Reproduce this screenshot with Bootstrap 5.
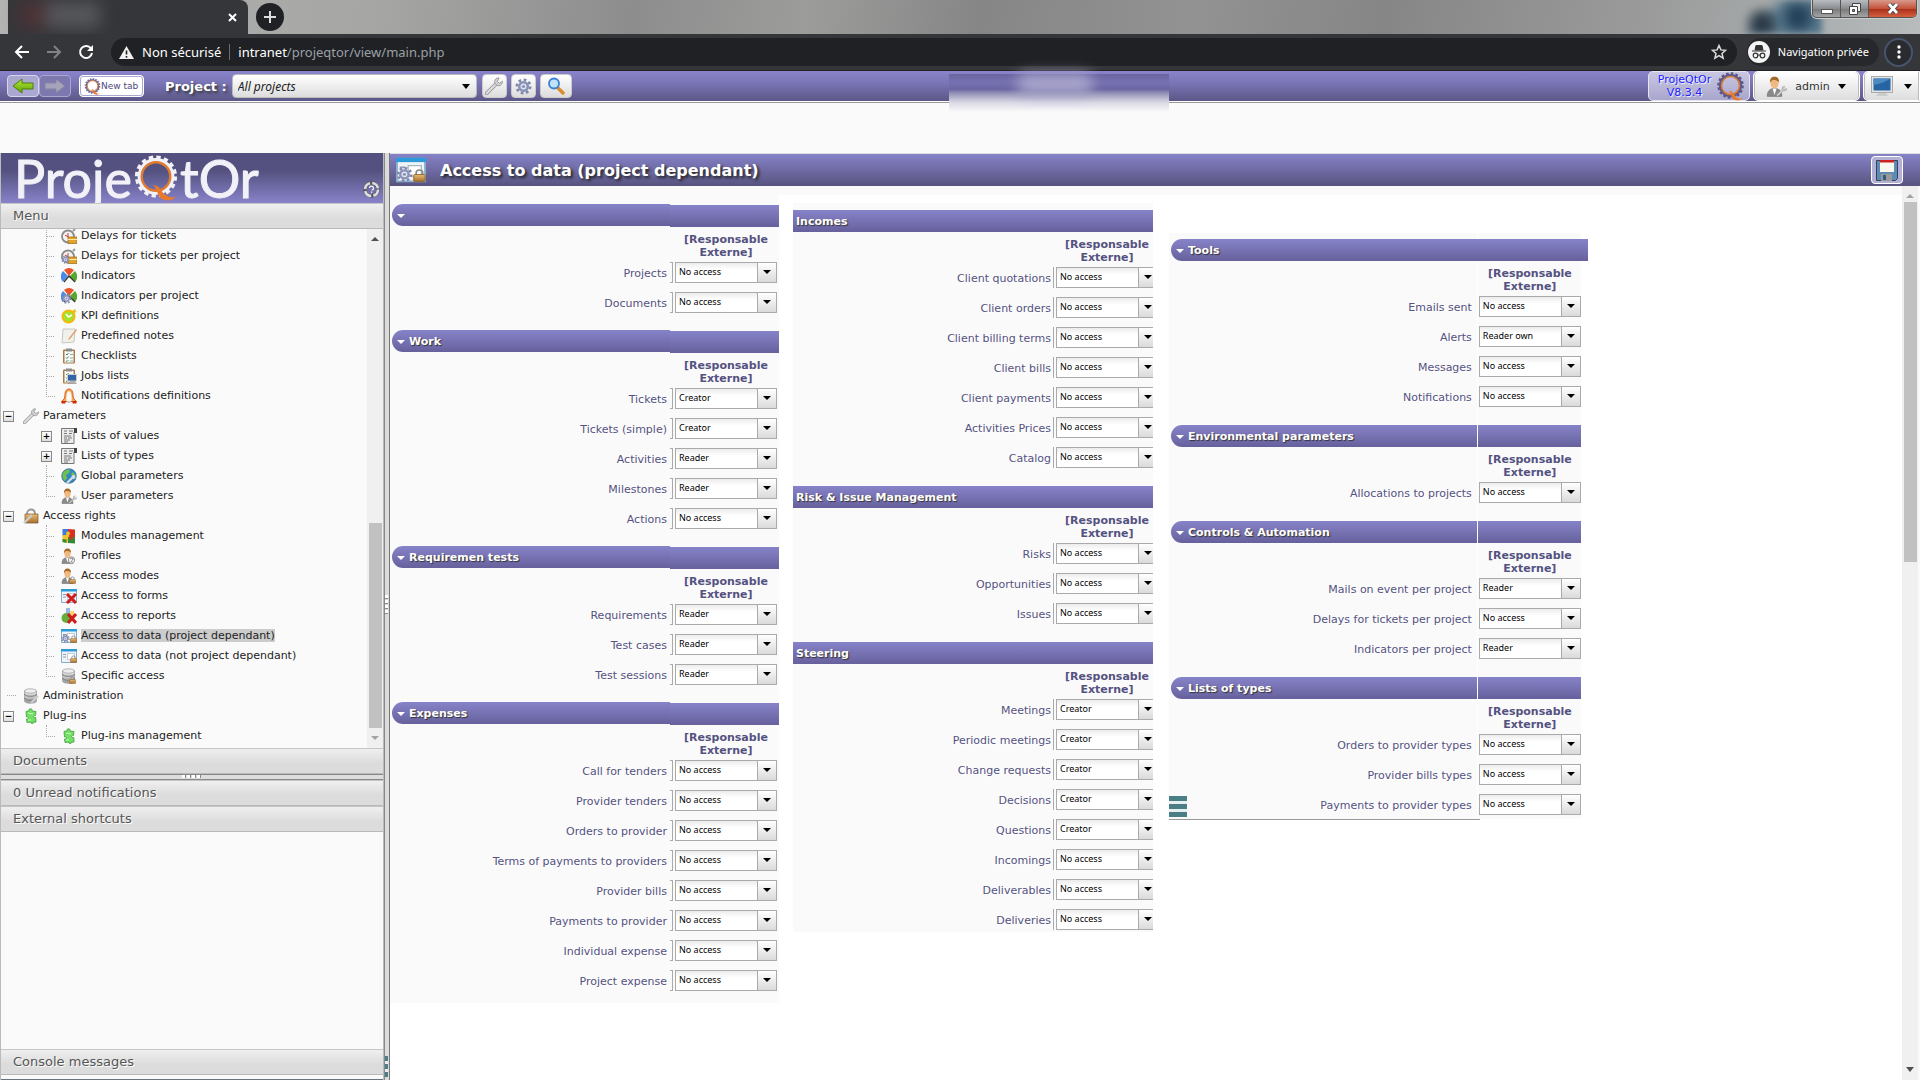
<!DOCTYPE html>
<html lang="en">
<head>
<meta charset="utf-8">
<meta name="viewport" content="width=device-width, initial-scale=1">
<title>ProjeQtOr - Access to data</title>
<link href="https://cdn.jsdelivr.net/npm/bootstrap@5.3.0/dist/css/bootstrap.min.css" rel="stylesheet">
<style>
:root{--ui:"DejaVu Sans",Verdana,sans-serif;--chrome:"Noto Sans",sans-serif;--ink:#545281}
body{font:11px/13px var(--ui);color:#222;background:#fafafa;height:100vh;overflow:hidden}
a{color:inherit;text-decoration:none}
svg{display:block;flex:none}
button{line-height:1}
/* browser frame */
.tabstrip{height:34px;background:linear-gradient(100deg,#b4b4b2 0,#a5a5a4 20%,#8d8d8d 33%,#9c9c9b 42%,#868686 51%,#929292 62%,#868686 72%,#9b9b9b 86%,#a8adae 94%,#b9bcbd);flex:none;padding-left:8px;overflow:hidden}
.browser-tab{width:240px;background:#35363a;border-radius:0 8px 0 0;padding-right:11px;position:relative}
.tab-smudge{position:absolute;left:12px;top:2px;width:80px;height:26px;filter:blur(8px);background:linear-gradient(90deg,#4c3236 25%,#56575b 40%)}
.close-x,.plus-btn,.nav-ico{border:0;background:none;padding:0;color:#e8eaed}
.plus-btn{width:28px;height:28px;border-radius:50%;background:#202124;margin:3px 0 0 8px}
.figure-blur{width:80px;height:34px;margin-right:-10px;filter:blur(3px);background:radial-gradient(circle at 70% 50%,#26435c 0 10%,transparent 36%),radial-gradient(circle at 25% 70%,#2c3b48 0 8%,transparent 30%),linear-gradient(135deg,transparent 26%,#5d7c8e 42%,#55768c 90%)}
.win-btns{height:18px;border:1px solid #555;border-top:0;border-radius:0 0 5px 5px;overflow:hidden;box-shadow:0 0 0 1px #ccc;margin-right:3px;z-index:1}
.win-btns button{border:0;border-right:1px solid #555;padding:0;width:28px;background:linear-gradient(#b8bcc0,#8a8d90 50%,#777 51%,#a5a5a5)}
.win-btns .win-close{width:47px;border:0;background:linear-gradient(#d99a8c,#c4523c 50%,#a82e17 51%,#d5603f)}
.addr-row{height:37px;background:#35363a;border-bottom:1px solid #222;flex:none;font:13px/18px var(--chrome);color:#fff;padding:4px 7px 4px 14px}
.omni{background:#202124;border-radius:14px;height:28px;padding:0 10px 0 8px;margin-left:17px}
.omni-sep{width:1px;height:16px;background:#6b6d71}
.omni-url{color:#9aa0a6}
.incog{height:28px;border-radius:14px;background:#27282b;font-size:11px;padding:0 10px 0 1px;margin:0 5px 0 10px}
.dots-btn{width:29px;height:29px;border-radius:50%;border:2px solid #46546c;background:#2a2b2e;padding:0}
/* application bar */
.app-bar{height:30px;flex:none;background:linear-gradient(#8a84cc,#7a75b5 40%,#5b5787);padding-left:7px}
.bar-line{height:2px;flex:none;background:#fff;border-bottom:1px solid #999}
.gap-band{height:50px;flex:none}
.lite-btn{border:1px solid #d7d5ec;border-radius:4px;background:#aaa7d1;padding:0;height:22px;width:32px}
.lite-btn:disabled{background:#7d79b0;border-color:#aaa7cf}
.newtab{width:65px;background:#fff;border:1px solid #fff;outline:1px solid #aaa7d1;outline-offset:-2px;color:#4c4a7c;font-size:9px}
.proj-lab{font-weight:700;font-size:13px;color:#fff;text-shadow:2px 2px 3px #333;margin:0 5px 0 21px}
.proj-sel{width:245px;height:24px;border:1px solid #bbb;border-radius:4px;font:italic 12px/16px var(--chrome);color:#222;padding:1px 0 0 5px;appearance:none;background:url("data:image/svg+xml,%3Csvg xmlns='http://www.w3.org/2000/svg' width='8' height='5'%3E%3Cpath d='M0 0h8L4 5z'/%3E%3C/svg%3E") right 6px center no-repeat,linear-gradient(#fff,#ddd)}
.tool-btns{gap:4px;margin-left:5px}
.tool-btn{height:24px;width:25px;border:1px solid #ccc;border-radius:4px;background:linear-gradient(#fff,#dcdcdc);padding:0}
.tool-btn.wide{width:32px}
.app-right{gap:3px}
.ver-btn{width:102px;height:30px;border:1px solid #e5e4f2;border-radius:5px;background:linear-gradient(#c9c7e2,#a9a6cd);color:#22f;text-shadow:1px 1px 1px #fff;line-height:13px}
.user-btn{width:107px;height:30px;border:1px solid #fff;border-radius:5px;background:linear-gradient(#fff,#ddd);box-shadow:inset 1px 0 0 #bbb,inset -1px 0 0 #bbb;padding:0 13px 0 12px;color:#333;font-size:11px}
.user-btn.screen{width:57px;border-radius:5px 0 0 5px;padding:0 7px}
.name-blur{position:absolute;left:949px;top:74px;width:220px;height:38px;background:linear-gradient(#6a659f,#7671b1 22%,#6b66a2 40%,#9996b9 52%,#dad9e5 75%,#fafafa)}
.name-blur i{display:block;width:76px;height:20px;margin:0 0 0 68px;background:#a9a6cc;border-radius:9px;filter:blur(7px)}
/* side panel */
.side{width:20%;border-left:1px solid #bbb;border-right:1px solid #bbb;flex:none}
.brand{height:50px;flex:none;background:linear-gradient(#545180 0,#545180 35%,#8883c9);padding:0 3px 0 13px;color:#f1f1f7}
.brand-word{font:400 52px/50px Lato,sans-serif;-webkit-text-stroke:1px #f1f1f7}
.fold{height:26px;flex:none;border:0;border-bottom:1px solid #b9b9b9;border-top:1px solid #c5c5c5;background:linear-gradient(#efefef,#dcdcdc 60%);font:13px/16px var(--ui);color:#555;text-align:left;padding:0 0 0 12px;text-shadow:1px 1px 0 #fff;width:100%}
.upper{flex:621 1 0;min-height:0}
.lower{flex:300 1 0;min-height:0}
.hsplit{height:6px;flex:none;border-top:1px solid #888;border-bottom:1px solid #888;background:#ddd}
.grip-h{width:20px;height:3px;background:repeating-linear-gradient(90deg,#fff 0 3px,#888 3px 4px,#ddd 4px 5px)}
.tree{list-style:none;margin:-4px 0 0;padding:0}
.tree li{height:20px;display:flex;align-items:center}
.tree a{line-height:13px;padding-top:1px;margin-left:4px}
.tree svg{width:16px;height:16px;margin:2px 0 0 6px}
.twig{width:9px;height:20px;margin-left:45px;flex:none;border-left:1px dotted #aaa;background:repeating-linear-gradient(90deg,#aaa 0 1px,transparent 1px 2px) 0 11px/9px 1px no-repeat}
.twig.end{height:12px;border-bottom:1px dotted #aaa;background:none;align-self:flex-start}
.exp{width:11px;height:11px;border:1px solid #888;background:linear-gradient(#fff,#ddd);padding:0;font:bold 9px/8px var(--ui);color:#000;margin:2px 0 0 2px;flex:none}
.exp.sub{margin-left:40px}
.tree .exp+svg{margin-left:9px}
.rootdash{width:9px;margin-left:6px;border-top:1px dotted #aaa}
.tree .rootdash+svg{margin-left:7px}
.tree .picked{background:#ccc;padding:0}
.scroller{width:16px;flex:none;background:#f0f0f0;align-items:center}
.scroller.outer{margin-right:2px}
.thumb{width:13px;background:#c1c1c1}
.vsplit{width:6px;flex:none;border-left:1px solid #888;border-right:1px solid #777;background:#dcdcdc}
.grip-v{width:3px;height:20px;background:repeating-linear-gradient(#fff 0 3px,#888 3px 4px,#ddd 4px 5px)}
/* main panel */
.page-head{height:33px;border-top:1px solid #ddd;flex:none;background:linear-gradient(#8682c8,#58547f);padding:0 17px 0 6px}
.page-head h1{font:bold 16px/20px var(--ui);color:#fff;text-shadow:2px 2px 3px #222;margin:0 0 0 14px;padding-top:1px}
.save-btn{width:32px;height:28px;border:1px solid #fff;border-radius:4px;background:#b3b0d5;padding:0}
.work{background:#fff;border-top:9px solid #fafafa;min-width:0}
.col-a{flex:388 1 0;background:#fafafa;padding:9px 0 12px 2px;min-width:0}
.col-b{flex:361 1 0;background:#fafafa;margin:8px 0 0 14px;padding:7px 0 2px;min-width:0}
.col-c{flex:418 1 0;margin:38px 0 0 16px;padding:6px 0 4px 2px;min-width:0;position:relative;background:linear-gradient(#fff,#fff) right 110px top/1px 100% no-repeat,linear-gradient(#fafafa,#fafafa) left/calc(100% - 7px) 100% no-repeat;border-bottom:1px solid #999;border-image:linear-gradient(90deg,#999 0 74%,transparent 74%) 1}
.col-rest{flex:315 1 0}
.sec-bar,.sec-side{height:22px;background:linear-gradient(#8783c9,#66619c)}
.sec-bar{flex:1 1 0;font:bold 11px/23px var(--ui);color:#fff;text-shadow:1px 1px 1px #333;margin:0;padding-left:5px;border-radius:11px 0 0 11px}
.sec-bar::before{content:"";display:inline-block;border:4px solid transparent;border-top-color:#fff;border-bottom:0;margin-right:4px;vertical-align:1px}
.col-b .sec-bar{border-radius:0;padding-left:3px}
.col-b .sec-bar::before{display:none}
.col-a .sec-side{width:109px;margin:1px 0 -1px}
.col-c .sec-side{width:103px;margin:0 7px 0 1px}
.role{text-align:center;font-weight:bold;color:var(--ink);width:102px;margin-left:auto;padding:6px 0 3px}
.col-a .role{padding-top:7px;margin-right:2px}
.col-b .role{margin-right:-5px}
.col-c .role{margin-right:7px}
.acc{height:21px;margin-bottom:9px;display:flex;justify-content:flex-end}
.acc label{color:var(--ink);padding:5px 3px 0 0;white-space:nowrap;text-shadow:1px 1px 0 #fff}
.acc select{width:102px;height:21px;border:1px solid #aaa;border-radius:0;font:9px/12px "Noto Sans",var(--ui);color:#000;padding:0 0 2px 3px;appearance:none;flex:none;order:2;background:url("data:image/svg+xml,%3Csvg xmlns='http://www.w3.org/2000/svg' width='8' height='4'%3E%3Cpath d='M0 0h8L4 4z'/%3E%3C/svg%3E") 87px 7px no-repeat,linear-gradient(#aaa,#aaa) 81px 0/1px 100% no-repeat,linear-gradient(#fff,#dadada) 82px 0/18px 100% no-repeat,linear-gradient(#ececec,#fff 35%)}
.col-a .acc{padding-right:2px}
.col-a .acc::before{content:"";order:1;width:3px;margin-right:2px;border:1px solid #aaa;border-left:0}
.col-b .acc::before{content:"";order:1;width:1px;margin-right:2px;background:#aaa}
.col-b .acc label{padding-right:2px}
.col-b .acc select{width:97px;border-right:0}
.col-c .acc{padding-right:7px}
.col-c .acc label{padding-right:7px}
section{padding-bottom:9px}
.col-a section{padding-bottom:8px}
section:last-of-type,.col-a section:last-of-type{padding-bottom:0}
section:last-of-type .acc:last-child{margin-bottom:0}
.teal{width:18px;height:21px;background:repeating-linear-gradient(#4b7f86 0 5px,#e8eff0 5px 8px)}
.col-c .teal{position:absolute;left:0;bottom:2px}
.vsplit .teal{width:3px;margin-bottom:3px}
.fit-y{min-height:0}
.fit-x{min-width:0}
</style>
<script src="https://cdn.jsdelivr.net/npm/bootstrap@5.3.0/dist/js/bootstrap.bundle.min.js"></script>
</head>
<body class="d-flex flex-column">
<svg width="0" height="0" class="position-absolute">
<defs>
<linearGradient id="gold" x1="0" y1="0" x2="0" y2="1"><stop offset="0" stop-color="#e8bd76"/><stop offset="1" stop-color="#a96f2c"/></linearGradient>
<linearGradient id="steel" x1="0" y1="0" x2="0" y2="1"><stop offset="0" stop-color="#eee"/><stop offset="1" stop-color="#999"/></linearGradient>
<linearGradient id="lime" x1="0" y1="0" x2="0" y2="1"><stop offset="0" stop-color="#b4e63c"/><stop offset="1" stop-color="#5ca300"/></linearGradient>
</defs>
<symbol id="lock" viewBox="0 0 8 8"><path d="M2 4V2.500a2 2 0 0 1 4 0V4" fill="none" stroke="#888"/><rect x=".5" y="3.500" width="7" height="4.500" rx=".5" fill="url(#gold)" stroke="#8a5c24" stroke-width=".5"/></symbol>
<symbol id="cog" viewBox="0 0 16 16"><circle cx="8" cy="8" r="6.300" fill="none" stroke="#7f87ae" stroke-width="2.500" stroke-dasharray="2.500 2.450"/><circle cx="8" cy="8" r="4" fill="#dfe2f0" stroke="#8a92b8" stroke-width="2.400"/><circle cx="8" cy="8" r="1.500" fill="#8a92b8"/></symbol>
<symbol id="clock" viewBox="0 0 16 16"><circle cx="7" cy="8.500" r="6" fill="#f4f4f4" stroke="#8b8b8b" stroke-width="1.800"/><path d="M7 9V5M7 9l-3-2" stroke="#c33"/><path d="M12 3l2-2" stroke="#999" stroke-width="2"/><path d="M7 9h9v6.500H7z" fill="#e0a32e" stroke="#9a6a12" stroke-width=".7"/><path d="M7 11.500h9" stroke="#ffe9a0"/></symbol>
<symbol id="clockp" viewBox="0 0 16 16"><use href="#clock"/><use href="#cog" x="0" y="7" width="9" height="9"/></symbol>
<symbol id="pie" viewBox="0 0 16 16"><path d="M8 8L3 2a8 8 0 0 1 10 0z" fill="#e95528"/><path d="M8 9L14 3a8 8 0 0 1 0 11z" fill="#56a92c"/><path d="M7 8L2 3a8 8 0 0 0 0 11z" fill="#4d8ae6"/><path d="M3 14l5-6 6 6" fill="none" stroke="#333" stroke-width="1.200"/></symbol>
<symbol id="piep" viewBox="0 0 16 16"><use href="#pie"/><use href="#cog" x="0" y="5" width="11" height="11"/></symbol>
<symbol id="kpi" viewBox="0 0 16 16"><circle cx="7.500" cy="8.500" r="6" fill="#a4e22c" stroke="#f2b80c" stroke-width="2"/><path d="M11 3l3-2 1.500 3-2 1z" fill="#f5bd1b"/><path d="M5 6l2.500 3L11 7" fill="none" stroke="#fff" stroke-width="1.500"/></symbol>
<symbol id="note" viewBox="0 0 16 16"><path d="M2 1h12l-1 13-12 1z" fill="#f1f1ec" stroke="#c8c8c0"/><path d="M15 1L8 10l-1 2 2-1L16 2z" fill="#e69a63"/></symbol>
<symbol id="check" viewBox="0 0 16 16"><rect x="2" y="1.500" width="12" height="14" rx="1" fill="#a97b49"/><rect x="3.500" y="3" width="9" height="11.500" fill="#f9faf5"/><rect x="5" y=".5" width="6" height="3" fill="#8d8d8d"/><path d="M5 6l1 1 1.500-2M5 9.500l1 1L7.500 8.500M5 13l1 .5L7.500 12" stroke="#3a8d72" fill="none"/><path d="M9 6.500h3M9 10h3M9 13h3" stroke="#8aa"/></symbol>
<symbol id="jobs" viewBox="0 0 16 16"><use href="#check"/><rect x="6.500" y="6.500" width="9" height="6.500" fill="#3364a8" stroke="#ccc"/><path d="M7 15.500h8.500l-2-2h-4z" fill="#bbb" stroke="#888" stroke-width=".5"/></symbol>
<symbol id="bell" viewBox="0 0 16 16"><path d="M8 1c3 0 4 3 4 6s1 4.500 3.500 6.500H.5C3 11.500 4 10 4 7s1-6 4-6z" fill="#f4a44a" stroke="#e05a1c" stroke-width="1"/><path d="M5.500 13c-.5-5 0-9 2.500-10 2.500 1 3 5 2.500 10z" fill="#fafafa"/><path d="M.5 14.300h4M11.500 14.300h4" stroke="#c9300a" stroke-width="2.400"/><path d="M6 14h4" stroke="#ccd" stroke-width="2"/></symbol>
<symbol id="wrench" viewBox="0 0 16 16"><path d="M1.500 14.500L10 6" stroke="#9a9a9a" stroke-width="3.400" stroke-linecap="round"/><path d="M1.500 14.500L10 6" stroke="#dedede" stroke-width="1.800" stroke-linecap="round"/><path d="M12.500.8a3.500 3.500 0 1 0 3 3L13 5.500 11 4z" fill="#cfcfcf" stroke="#999" stroke-width=".8"/></symbol>
<symbol id="list" viewBox="0 0 16 16"><path d="M.5.5h15v3.500h-2.500v11.500H.5z" fill="#ececec" stroke="#777"/><path d="M3 3h3M8 3h4M3 5.500h3M8 5.500h3M3 8h7M3 10h3M7 10h4M3 12h6M3 14h4" stroke="#777"/><path d="M13 0h3v5h-3z" fill="#444"/></symbol>
<symbol id="globe" viewBox="0 0 16 16"><circle cx="8" cy="8" r="7.300" fill="#3488c6" stroke="#235b86" stroke-width=".6"/><path d="M2 5c2-4 6-4 7-3L8 5 5 7l1 3-2 3C1 10 1 7 2 5zM12 4l3 4-3 1-2-3z" fill="#6fc04e"/><path d="M6 15l6-6" stroke="#ddd" stroke-width="2.200"/><circle cx="12.500" cy="9" r="2" fill="#d5dde4"/></symbol>
<symbol id="man" viewBox="0 0 16 16"><path d="M1 15.500c0-4 2-6 5.500-6s5.500 2 5.500 6z" fill="#8b8b8b" stroke="#666" stroke-width=".5"/><path d="M5 9.500l1.500 5L8 9.500z" fill="#fff"/><ellipse cx="6.500" cy="5.200" rx="3.200" ry="4.200" fill="#efb981"/><path d="M3 5c0-3 1-4.500 3.500-4.500S10 2 10 5C9 3 6 3 5 3z" fill="#a56a2a"/></symbol>
<symbol id="manw" viewBox="0 0 16 16"><use href="#man"/><use href="#wrench" x="8" y="7" width="8" height="9"/></symbol>
<symbol id="manp" viewBox="0 0 16 16"><use href="#man"/><circle cx="10.500" cy="12" r="3.200" fill="#eee" stroke="#999"/><path d="M9.500 11a1.200 1.200 0 1 1 1.200 1.300M10.600 13v1" fill="none" stroke="#666" stroke-width=".8"/></symbol>
<symbol id="manl" viewBox="0 0 16 16"><use href="#man"/><use href="#lock" x="8" y="8" width="7" height="8"/></symbol>
<symbol id="bag" viewBox="0 0 16 16"><path d="M4 6c0-6 8-6 8 0" fill="none" stroke="#999" stroke-width="1.800"/><path d="M2 6h13v9H2z" fill="url(#gold)" stroke="#7d5525" stroke-width=".7"/><path d="M1 15L9 7" stroke="#ccc" stroke-width="2.400"/></symbol>
<symbol id="mods" viewBox="0 0 16 16"><path d="M1.500 1h6v7h-6z" fill="#3d7be0"/><path d="M7 1l7 .5V9H7z" fill="#d93025"/><path d="M1.500 7H8v8l-6.500-1z" fill="#f0c22a"/><path d="M7 9h7v6.500L7 15z" fill="#348b35"/><circle cx="7" cy="5.500" r="2" fill="#f0c22a"/><circle cx="10" cy="10" r="1.800" fill="#d93025"/><path d="M1.500 11l4 .5v3.500l-4-1z" fill="#348b35"/></symbol>
<symbol id="form" viewBox="0 0 16 16"><path d="M.5 1.500h15v13H.5z" fill="#eef3f7" stroke="#86aecb"/><path d="M0 1h16v2.500H0z" fill="#2c9ad6"/><path d="M2 6.500h3M2 9h3" stroke="#8e9bab"/><path d="M6.500 5.500h7v6h-7z" fill="#fff" stroke="#aab7c3" stroke-width=".7"/></symbol>
<symbol id="formx" viewBox="0 0 16 16"><use href="#form"/><path d="M6 6l9 9M15 6l-9 9" stroke="#d01c1c" stroke-width="3"/></symbol>
<symbol id="repx" viewBox="0 0 16 16"><path d="M5 0h4v7H5z" fill="#9bb8ea"/><path d="M9 3h4v5H9z" fill="#f5d573"/><circle cx="5.500" cy="10" r="5" fill="#65ad3c"/><path d="M7 6l8 9M15 6l-8 9" stroke="#cd1d1d" stroke-width="3"/></symbol>
<symbol id="datap" viewBox="0 0 16 16"><use href="#form"/><use href="#cog" x="0" y="6" width="9" height="9"/><use href="#lock" x="9" y="7" width="7" height="8"/></symbol>
<symbol id="data" viewBox="0 0 16 16"><use href="#form"/><use href="#lock" x="9" y="7" width="7" height="8"/></symbol>
<symbol id="db" viewBox="0 0 16 16"><path d="M1.500 3v10c0 3 12 3 12 0V3z" fill="url(#steel)" stroke="#999" stroke-width=".7"/><path d="M1.500 6c0 3 12 3 12 0M1.500 10c0 3 12 3 12 0" fill="none" stroke="#777"/><ellipse cx="7.500" cy="3" rx="6" ry="2.200" fill="#eee" stroke="#999" stroke-width=".7"/></symbol>
<symbol id="dbl" viewBox="0 0 16 16"><use href="#db"/><use href="#lock" x="8" y="8" width="7" height="8"/></symbol>
<symbol id="dbw" viewBox="0 0 16 16"><use href="#db"/><path d="M8 15l7-7" stroke="#ccc" stroke-width="2.200"/></symbol>
<symbol id="plug" viewBox="0 0 16 16"><path d="M3 3.500l3-.5c-1-3 4-3 3 0l4 .5-.5 4c-2.500-1-2.500 3 .3 2L13 14l-3 .3c1 2-2.500 2-2-.3l-4 .5L3.500 11c2.500 1 2.500-3 0-2z" fill="#72e065" stroke="#3d9a38" stroke-width=".8"/><path d="M5 5l5 1M5 12h3" stroke="#c8ffbd"/></symbol>
<symbol id="qring" viewBox="0 0 30 30"><circle cx="15" cy="14" r="12" fill="none" stroke="var(--tooth)" stroke-width="3.500" stroke-dasharray="2.700 2"/><circle cx="15" cy="14" r="10.800" fill="none" stroke="var(--tooth)" stroke-width="2.400"/><circle cx="15" cy="14" r="9.300" fill="none" stroke="#e07a30" stroke-width="1.600"/><path d="M13 19.500c5 .5 5 4 8 6.500 2 1.600 4 1.800 7 1.500-3 2.600-7.500 2.600-10 .5-2.500-2.300-2-6-5-8.500z" fill="#e9792b"/></symbol>
</svg>

<div class="tabstrip d-flex">
  <div class="browser-tab d-flex align-items-center justify-content-end"><span class="tab-smudge"></span>
    <button class="close-x" aria-label="Close tab"><svg width="9" height="9" viewBox="0 0 9 9"><path d="M1 1l7 7M8 1L1 8" stroke="#fff" stroke-width="2"/></svg></button></div>
  <button class="plus-btn d-flex align-items-center justify-content-center" aria-label="New browser tab"><svg width="12" height="12"><path d="M6 0v12M0 6h12" stroke="#ddd" stroke-width="2"/></svg></button>
  <span class="figure-blur ms-auto"></span>
  <div class="win-btns d-flex"><button class="d-flex justify-content-center pt-2" aria-label="Minimise"><svg width="12" height="6"><rect x=".5" y="1.500" width="11" height="4" fill="#fff" stroke="#555"/></svg></button><button class="d-flex justify-content-center align-items-center" aria-label="Restore"><svg width="12" height="12"><path d="M3.500.5h8v8h-8z" fill="#eee" stroke="#444"/><path d="M.5 3.500h8v8h-8z" fill="#fff" stroke="#444"/><path d="M3.500 6.500h2v2h-2z" fill="#888" stroke="#444"/></svg></button><button class="win-close d-flex justify-content-center align-items-center" aria-label="Close"><svg width="12" height="11"><path d="M2 1l8 9M10 1L2 10" stroke="#444" stroke-width="4.500"/><path d="M2 1l8 9M10 1L2 10" stroke="#fff" stroke-width="2.800"/></svg></button></div>
</div>
<div class="addr-row d-flex align-items-center">
  <button class="nav-ico" aria-label="Back"><svg width="16" height="14"><path d="M15 7H2M8 1L2 7l6 6" fill="none" stroke="#fff" stroke-width="2"/></svg></button>
  <button class="nav-ico ms-3" aria-label="Forward"><svg width="16" height="14"><path d="M1 7h13M8 1l6 6-6 6" fill="none" stroke="#808287" stroke-width="2"/></svg></button>
  <button class="nav-ico ms-3" aria-label="Reload"><svg width="16" height="16"><path d="M13 4.500A6 6 0 1 0 14 9" fill="none" stroke="#fff" stroke-width="2"/><path d="M15 1v6H9z" fill="#fff"/></svg></button>
  <div class="omni d-flex align-items-center flex-fill">
    <svg width="15" height="13" viewBox="0 0 15 13"><path d="M7.500 0L15 13H0z" fill="#f1f1f1"/><path d="M7.500 4.500v4M7.500 10v1.700" stroke="#202124" stroke-width="1.600"/></svg>
    <span class="ms-2">Non sécurisé</span><span class="omni-sep mx-2"></span>
    <span>intranet<span class="omni-url">/projeqtor/view/main.php</span></span>
    <svg class="ms-auto" width="16" height="16" viewBox="0 0 16 16"><path d="M8 1.500l1.900 4.400 4.700.4-3.600 3.200 1.100 4.600L8 11.600l-4.100 2.500L5 9.500 1.400 6.300l4.700-.4z" fill="none" stroke="#ddd" stroke-width="1.500"/></svg>
  </div>
  <div class="incog d-flex align-items-center"><svg width="22" height="22" viewBox="0 0 22 22"><circle cx="11" cy="11" r="11" fill="#f5f5f5"/><path d="M4 10h14M7 9l1-4.500h6L15 9z" fill="#333" stroke="#333"/><circle cx="7.500" cy="14.500" r="2.300" fill="none" stroke="#333" stroke-width="1.200"/><circle cx="14.500" cy="14.500" r="2.300" fill="none" stroke="#333" stroke-width="1.200"/><path d="M9.800 14h2.400" stroke="#333"/></svg><span class="ms-2">Navigation privée</span></div>
  <button class="dots-btn d-flex align-items-center justify-content-center" aria-label="Menu"><svg width="4" height="14"><circle cx="2" cy="2" r="1.700" fill="#fff"/><circle cx="2" cy="7" r="1.700" fill="#fff"/><circle cx="2" cy="12" r="1.700" fill="#fff"/></svg></button>
</div>

<header class="app-bar d-flex align-items-center">
  <button class="lite-btn d-flex align-items-center justify-content-center" aria-label="Previous"><svg width="22" height="16" viewBox="0 0 22 16"><path d="M1 8l9-7v4h11v6H10v4z" fill="url(#lime)" stroke="#4b7f0c"/></svg></button>
  <button class="lite-btn d-flex align-items-center justify-content-center" disabled aria-label="Next"><svg width="22" height="16" viewBox="0 0 22 16"><path d="M21 8l-9-7v4H1v6h11v4z" fill="#a5a3ba" stroke="#8583a0"/></svg></button>
  <button class="lite-btn newtab ms-2 d-flex align-items-center px-1"><svg width="17" height="17" style="--tooth:#6e6a9c"><use href="#qring"/></svg><span>New tab</span></button>
  <label class="proj-lab" for="project">Project :</label>
  <select class="proj-sel" id="project"><option>All projects</option></select>
  <div class="tool-btns d-flex">
  <button class="tool-btn d-flex align-items-center justify-content-center" aria-label="Parameters"><svg width="18" height="18"><use href="#wrench"/></svg></button>
  <button class="tool-btn d-flex align-items-center justify-content-center" aria-label="Settings"><svg width="17" height="17"><use href="#cog"/></svg></button>
  <button class="tool-btn wide d-flex align-items-center justify-content-center" aria-label="Search"><svg width="18" height="18" viewBox="0 0 18 18"><path d="M10 10l6 6" stroke="#d98d2b" stroke-width="3.500" stroke-linecap="round"/><circle cx="7" cy="6.500" r="5" fill="#bfe3fb" stroke="#3c7fd0" stroke-width="1.800"/></svg></button>
  </div>
  <div class="app-right d-flex ms-auto">
  <button class="ver-btn d-flex align-items-center p-0"><span class="text-center flex-fill ps-2">ProjeQtOr<br>V8.3.4</span><svg class="me-1 ms-1" width="29" height="29" style="--tooth:#5d5988"><use href="#qring"/></svg></button>
  <button class="user-btn d-flex align-items-center justify-content-between"><svg width="21" height="23"><use href="#manw"/></svg><span>admin</span><svg width="8" height="5"><path d="M0 0h8L4 5z"/></svg></button>
  <button class="user-btn screen d-flex align-items-center justify-content-between" aria-label="Screen"><svg width="22" height="22" viewBox="0 0 22 22"><rect x=".5" y="1.500" width="21" height="16" fill="#e4e4e4" stroke="#aaa"/><rect x="2.500" y="3.500" width="17" height="12" fill="#2565a3"/><path d="M2.500 10c6-1 12-3 17-6.500H2.500z" fill="#4e8ac2"/><path d="M7 18h8l2 3H5z" fill="#ccc"/></svg><svg width="8" height="5"><path d="M0 0h8L4 5z"/></svg></button>
  </div>
</header>
<div class="name-blur"><i></i></div>
<div class="bar-line"></div>
<div class="gap-band"></div>

<div class="d-flex flex-fill fit-y">
<aside class="side d-flex flex-column">
  <div class="upper d-flex flex-column">
    <div class="brand d-flex justify-content-between">
      <div class="d-flex align-items-center"><span class="brand-word">Proje</span><svg width="48" height="46" style="--tooth:#f1f1f7"><use href="#qring"/></svg><span class="brand-word">tOr</span></div>
      <svg class="align-self-end mb-1" width="17" height="19" viewBox="0 0 17 19"><circle cx="8.500" cy="9.500" r="6.500" fill="none" stroke="#555" stroke-width="3.600"/><circle cx="8.500" cy="9.500" r="6.500" fill="none" stroke="#ddd" stroke-width="2.600" stroke-dasharray="8 2.200"/><path d="M6.500 8a2 2 0 1 1 2.200 2.200M8.600 11.500v1.300" fill="none" stroke="#fff" stroke-width="1.200"/></svg>
    </div>
    <button class="fold">Menu</button>
    <div class="d-flex flex-fill fit-y">
      <nav class="flex-fill overflow-hidden"><ul class="tree">
        <li><span class="twig"></span><svg><use href="#clock"/></svg><a href="#">Delays for tickets</a></li>
        <li><span class="twig"></span><svg><use href="#clockp"/></svg><a href="#">Delays for tickets per project</a></li>
        <li><span class="twig"></span><svg><use href="#pie"/></svg><a href="#">Indicators</a></li>
        <li><span class="twig"></span><svg><use href="#piep"/></svg><a href="#">Indicators per project</a></li>
        <li><span class="twig"></span><svg><use href="#kpi"/></svg><a href="#">KPI definitions</a></li>
        <li><span class="twig"></span><svg><use href="#note"/></svg><a href="#">Predefined notes</a></li>
        <li><span class="twig"></span><svg><use href="#check"/></svg><a href="#">Checklists</a></li>
        <li><span class="twig"></span><svg><use href="#jobs"/></svg><a href="#">Jobs lists</a></li>
        <li><span class="twig end"></span><svg><use href="#bell"/></svg><a href="#">Notifications definitions</a></li>
        <li><button class="exp">−</button><svg><use href="#wrench"/></svg><a href="#">Parameters</a></li>
        <li><button class="exp sub">+</button><svg><use href="#list"/></svg><a href="#">Lists of values</a></li>
        <li><button class="exp sub">+</button><svg><use href="#list"/></svg><a href="#">Lists of types</a></li>
        <li><span class="twig"></span><svg><use href="#globe"/></svg><a href="#">Global parameters</a></li>
        <li><span class="twig end"></span><svg><use href="#manw"/></svg><a href="#">User parameters</a></li>
        <li><button class="exp">−</button><svg><use href="#bag"/></svg><a href="#">Access rights</a></li>
        <li><span class="twig"></span><svg><use href="#mods"/></svg><a href="#">Modules management</a></li>
        <li><span class="twig"></span><svg><use href="#manp"/></svg><a href="#">Profiles</a></li>
        <li><span class="twig"></span><svg><use href="#manl"/></svg><a href="#">Access modes</a></li>
        <li><span class="twig"></span><svg><use href="#formx"/></svg><a href="#">Access to forms</a></li>
        <li><span class="twig"></span><svg><use href="#repx"/></svg><a href="#">Access to reports</a></li>
        <li><span class="twig"></span><svg><use href="#datap"/></svg><a class="picked" href="#">Access to data (project dependant)</a></li>
        <li><span class="twig"></span><svg><use href="#data"/></svg><a href="#">Access to data (not project dependant)</a></li>
        <li><span class="twig end"></span><svg><use href="#dbl"/></svg><a href="#">Specific access</a></li>
        <li><span class="rootdash"></span><svg><use href="#dbw"/></svg><a href="#">Administration</a></li>
        <li><button class="exp">−</button><svg><use href="#plug"/></svg><a href="#">Plug-ins</a></li>
        <li><span class="twig end"></span><svg><use href="#plug"/></svg><a href="#">Plug-ins management</a></li>
      </ul></nav>
      <div class="scroller d-flex flex-column py-2"><svg width="8" height="4"><path d="M0 4h8L4 0z" fill="#505050"/></svg><div style="flex:283 1 0"></div><div class="thumb" style="flex:206 1 0"></div><svg class="mt-2" width="8" height="4"><path d="M0 0h8L4 4z" fill="#a3a3a3"/></svg></div>
    </div>
    <button class="fold">Documents</button>
  </div>
  <div class="hsplit d-flex justify-content-center"><span class="grip-h"></span></div>
  <div class="lower d-flex flex-column">
    <button class="fold">0 Unread notifications</button>
    <button class="fold">External shortcuts</button>
    <div class="flex-fill"></div>
    <button class="fold">Console messages</button>
    <div class="border-bottom border-secondary pt-1"></div>
  </div>
</aside>
<div class="vsplit d-flex flex-column"><span class="grip-v mt-auto"></span><span class="teal mt-auto"></span></div>

<main class="d-flex flex-column flex-fill fit-x">
  <div class="page-head d-flex align-items-center">
    <svg width="30" height="28" viewBox="0 0 16 16" preserveAspectRatio="none"><use href="#datap"/></svg>
    <h1>Access to data (project dependant)</h1>
    <button class="save-btn ms-auto d-flex align-items-center justify-content-center" aria-label="Save"><svg width="22" height="21" viewBox="0 0 22 21"><path d="M.5.5h21v18l-2 2H.5z" fill="#5d8bb5" stroke="#345"/><path d="M4 0h14v12H4z" fill="#f8f8f0"/><path d="M4 0h14v2.500H4z" fill="#cf2020"/><path d="M5 14h11v7H5z" fill="#999"/><path d="M7 15h3v5H7z" fill="#335d85"/></svg></button>
  </div>
  <div class="d-flex flex-fill fit-y">
  <form class="work d-flex flex-fill align-items-start">
    <div class="col-a">
      <section><div class="d-flex"><h2 class="sec-bar"></h2><div class="sec-side"></div></div><div class="role">[Responsable<br>Externe]</div>
        <div class="acc"><label for="a1">Projects</label><select id="a1"><option>No access</option></select></div>
        <div class="acc"><label for="a2">Documents</label><select id="a2"><option>No access</option></select></div></section>
      <section><div class="d-flex"><h2 class="sec-bar">Work</h2><div class="sec-side"></div></div><div class="role">[Responsable<br>Externe]</div>
        <div class="acc"><label for="a3">Tickets</label><select id="a3"><option>Creator</option></select></div>
        <div class="acc"><label for="a4">Tickets (simple)</label><select id="a4"><option>Creator</option></select></div>
        <div class="acc"><label for="a5">Activities</label><select id="a5"><option>Reader</option></select></div>
        <div class="acc"><label for="a6">Milestones</label><select id="a6"><option>Reader</option></select></div>
        <div class="acc"><label for="a7">Actions</label><select id="a7"><option>No access</option></select></div></section>
      <section><div class="d-flex"><h2 class="sec-bar">Requiremen tests</h2><div class="sec-side"></div></div><div class="role">[Responsable<br>Externe]</div>
        <div class="acc"><label for="a8">Requirements</label><select id="a8"><option>Reader</option></select></div>
        <div class="acc"><label for="a9">Test cases</label><select id="a9"><option>Reader</option></select></div>
        <div class="acc"><label for="a10">Test sessions</label><select id="a10"><option>Reader</option></select></div></section>
      <section><div class="d-flex"><h2 class="sec-bar">Expenses</h2><div class="sec-side"></div></div><div class="role">[Responsable<br>Externe]</div>
        <div class="acc"><label for="a11">Call for tenders</label><select id="a11"><option>No access</option></select></div>
        <div class="acc"><label for="a12">Provider tenders</label><select id="a12"><option>No access</option></select></div>
        <div class="acc"><label for="a13">Orders to provider</label><select id="a13"><option>No access</option></select></div>
        <div class="acc"><label for="a14">Terms of payments to providers</label><select id="a14"><option>No access</option></select></div>
        <div class="acc"><label for="a15">Provider bills</label><select id="a15"><option>No access</option></select></div>
        <div class="acc"><label for="a16">Payments to provider</label><select id="a16"><option>No access</option></select></div>
        <div class="acc"><label for="a17">Individual expense</label><select id="a17"><option>No access</option></select></div>
        <div class="acc"><label for="a18">Project expense</label><select id="a18"><option>No access</option></select></div></section>
    </div>
    <div class="col-b">
      <section><h2 class="sec-bar">Incomes</h2><div class="role">[Responsable<br>Externe]</div>
        <div class="acc"><label for="b1">Client quotations</label><select id="b1"><option>No access</option></select></div>
        <div class="acc"><label for="b2">Client orders</label><select id="b2"><option>No access</option></select></div>
        <div class="acc"><label for="b3">Client billing terms</label><select id="b3"><option>No access</option></select></div>
        <div class="acc"><label for="b4">Client bills</label><select id="b4"><option>No access</option></select></div>
        <div class="acc"><label for="b5">Client payments</label><select id="b5"><option>No access</option></select></div>
        <div class="acc"><label for="b6">Activities Prices</label><select id="b6"><option>No access</option></select></div>
        <div class="acc"><label for="b7">Catalog</label><select id="b7"><option>No access</option></select></div></section>
      <section><h2 class="sec-bar">Risk &amp; Issue Management</h2><div class="role">[Responsable<br>Externe]</div>
        <div class="acc"><label for="b8">Risks</label><select id="b8"><option>No access</option></select></div>
        <div class="acc"><label for="b9">Opportunities</label><select id="b9"><option>No access</option></select></div>
        <div class="acc"><label for="b10">Issues</label><select id="b10"><option>No access</option></select></div></section>
      <section><h2 class="sec-bar">Steering</h2><div class="role">[Responsable<br>Externe]</div>
        <div class="acc"><label for="b11">Meetings</label><select id="b11"><option>Creator</option></select></div>
        <div class="acc"><label for="b12">Periodic meetings</label><select id="b12"><option>Creator</option></select></div>
        <div class="acc"><label for="b13">Change requests</label><select id="b13"><option>Creator</option></select></div>
        <div class="acc"><label for="b14">Decisions</label><select id="b14"><option>Creator</option></select></div>
        <div class="acc"><label for="b15">Questions</label><select id="b15"><option>Creator</option></select></div>
        <div class="acc"><label for="b16">Incomings</label><select id="b16"><option>No access</option></select></div>
        <div class="acc"><label for="b17">Deliverables</label><select id="b17"><option>No access</option></select></div>
        <div class="acc"><label for="b18">Deliveries</label><select id="b18"><option>No access</option></select></div></section>
    </div>
    <div class="col-c">
      <section><div class="d-flex"><h2 class="sec-bar">Tools</h2></div><div class="role">[Responsable<br>Externe]</div>
        <div class="acc"><label for="c1">Emails sent</label><select id="c1"><option>No access</option></select></div>
        <div class="acc"><label for="c2">Alerts</label><select id="c2"><option>Reader own</option></select></div>
        <div class="acc"><label for="c3">Messages</label><select id="c3"><option>No access</option></select></div>
        <div class="acc"><label for="c4">Notifications</label><select id="c4"><option>No access</option></select></div></section>
      <section><div class="d-flex"><h2 class="sec-bar">Environmental parameters</h2><div class="sec-side"></div></div><div class="role">[Responsable<br>Externe]</div>
        <div class="acc"><label for="c5">Allocations to projects</label><select id="c5"><option>No access</option></select></div></section>
      <section><div class="d-flex"><h2 class="sec-bar">Controls &amp; Automation</h2><div class="sec-side"></div></div><div class="role">[Responsable<br>Externe]</div>
        <div class="acc"><label for="c6">Mails on event per project</label><select id="c6"><option>Reader</option></select></div>
        <div class="acc"><label for="c7">Delays for tickets per project</label><select id="c7"><option>No access</option></select></div>
        <div class="acc"><label for="c8">Indicators per project</label><select id="c8"><option>Reader</option></select></div></section>
      <section><div class="d-flex"><h2 class="sec-bar">Lists of types</h2><div class="sec-side"></div></div><div class="role">[Responsable<br>Externe]</div>
        <div class="acc"><label for="c9">Orders to provider types</label><select id="c9"><option>No access</option></select></div>
        <div class="acc"><label for="c10">Provider bills types</label><select id="c10"><option>No access</option></select></div>
        <div class="acc"><label for="c11">Payments to provider types</label><select id="c11"><option>No access</option></select></div></section>
      <span class="teal"></span>
    </div>
    <div class="col-rest"></div>
  </form>
  <div class="scroller outer d-flex flex-column py-2"><svg class="mb-1" width="8" height="4"><path d="M0 4h8L4 0z" fill="#a3a3a3"/></svg><div class="thumb" style="flex:359 1 0"></div><div style="flex:503 1 0"></div><svg width="8" height="5"><path d="M0 0h8L4 5z" fill="#505050"/></svg></div>
  </div>
</main>
</div>
</body>
</html>
